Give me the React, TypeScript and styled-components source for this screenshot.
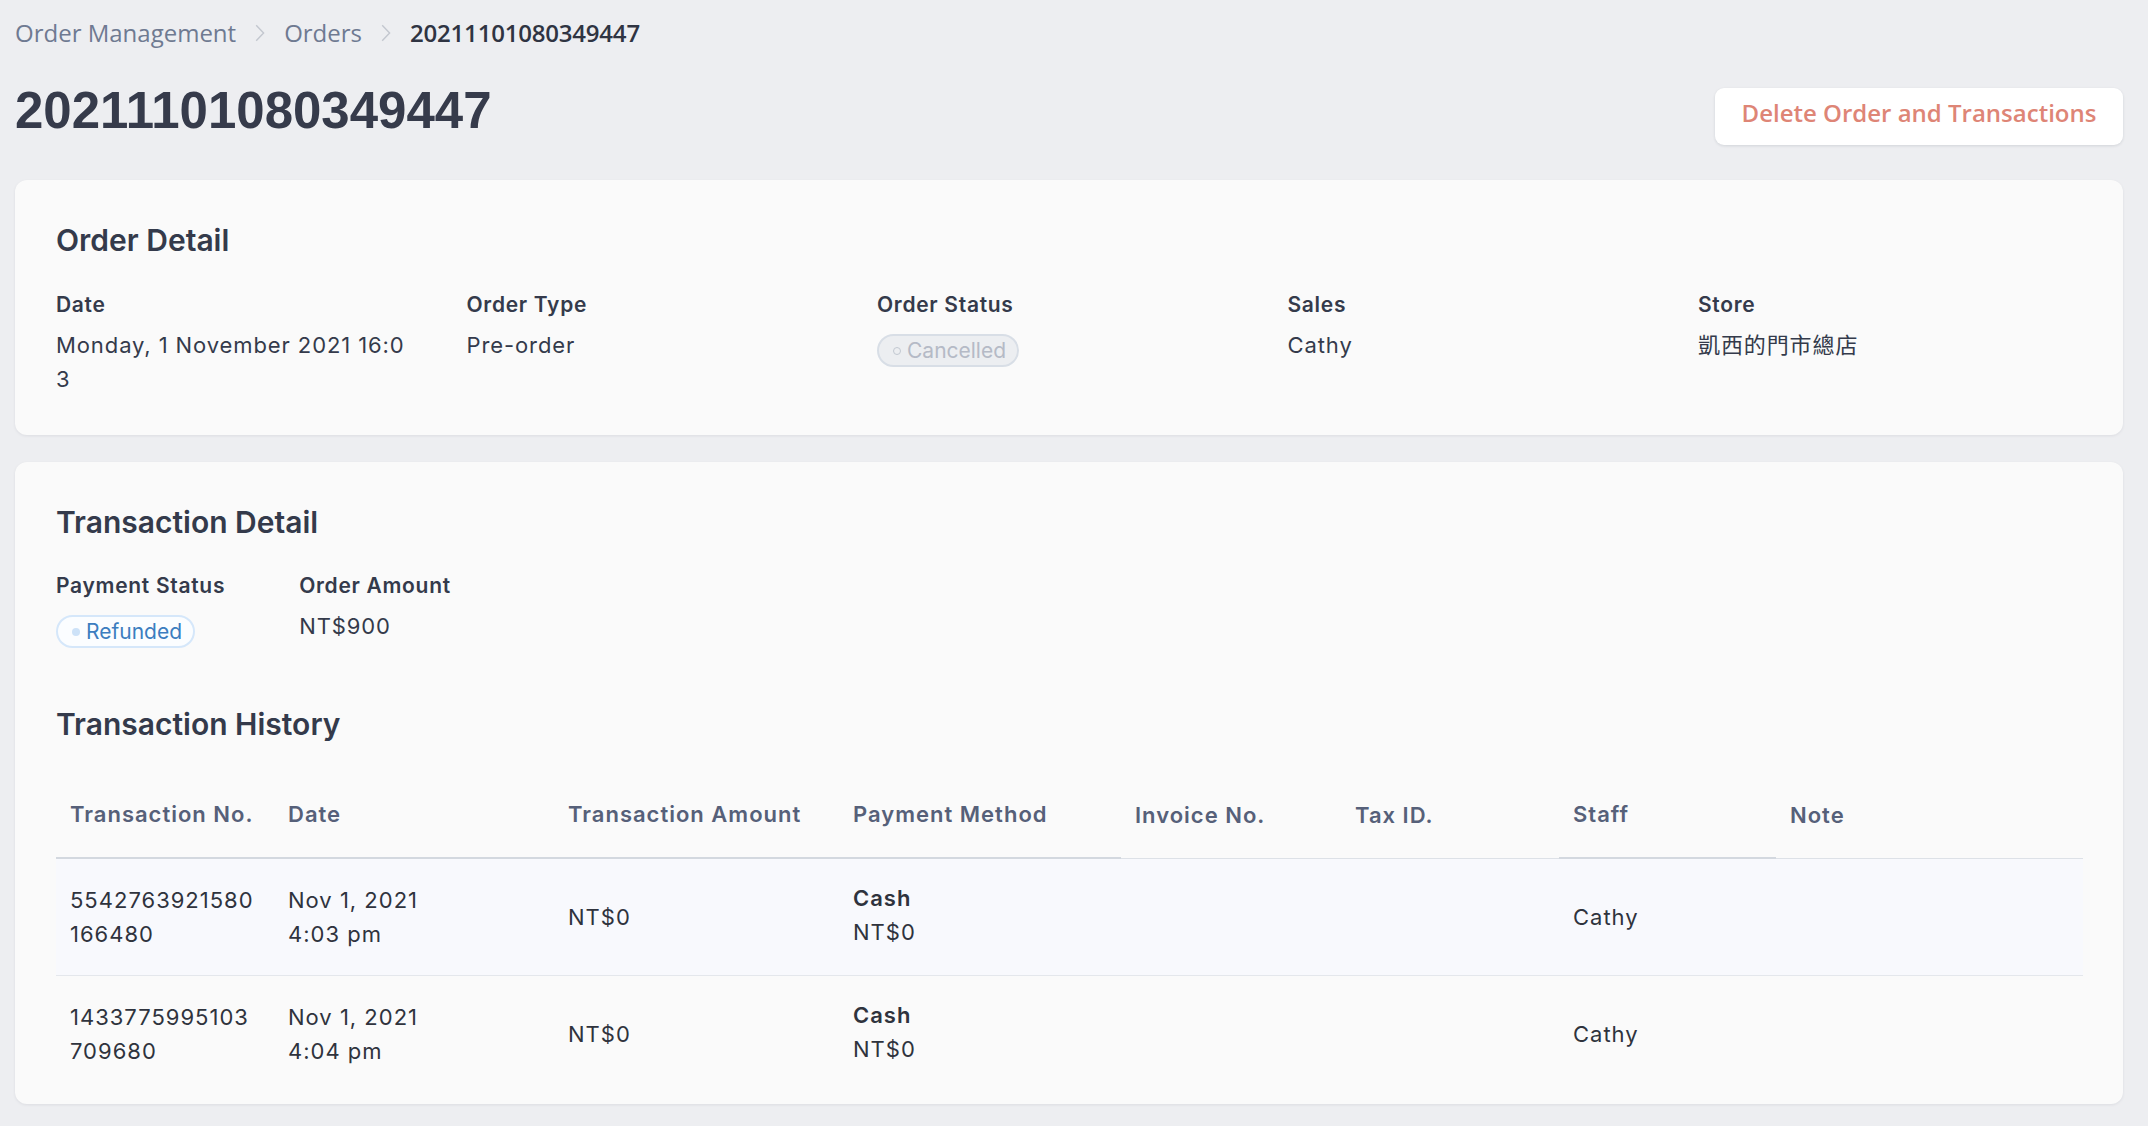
import styled, { createGlobalStyle } from 'styled-components';

const GlobalStyle = createGlobalStyle`
  body {
    margin: 0;
    background: #edeef1;
    font-family: Inter, "Noto Sans CJK TC", sans-serif;
    color: #343a4b;
  }
`;

const Page = styled.div`
  padding: 17px 25px 20px 15px;
`;

const Breadcrumb = styled.nav`
  display: flex;
  align-items: center;
  gap: 19px;
  font-family: "Open Sans", sans-serif;
  font-size: 24px;
  line-height: 32px;
  color: #6f7a91;
`;

const Crumb = styled.span<{ $current?: boolean }>`
  font-weight: ${(p) => (p.$current ? 600 : 400)};
  color: ${(p) => (p.$current ? '#2f3442' : '#6f7a91')};
  letter-spacing: ${(p) => (p.$current ? '-0.2px' : '0')};
`;

const TitleRow = styled.div`
  display: flex;
  justify-content: space-between;
  align-items: flex-start;
  margin-top: 32px;
  margin-bottom: 35px;
`;

const Title = styled.h1`
  margin: 0;
  font-family: "Liberation Sans", Arial, sans-serif;
  font-weight: 700;
  font-size: 51px;
  line-height: 60px;
  color: #363b4b;
`;

const DangerButton = styled.button`
  margin-top: 7px;
  width: 408px;
  height: 57px;
  padding: 0 0 9px;
  border: none;
  border-radius: 9px;
  background: #ffffff;
  box-shadow: 0 1px 3px rgba(20, 30, 50, 0.12);
  font-family: "Open Sans", sans-serif;
  font-weight: 600;
  font-size: 24px;
  color: #de8576;
  cursor: pointer;
`;

const Card = styled.section<{ $bottom?: number }>`
  background: #fafafa;
  border-radius: 12px;
  box-shadow: 0 1px 3px rgba(20, 30, 50, 0.08);
  padding: 42px 40px ${(p) => p.$bottom ?? 39}px 41px;
  & + & {
    margin-top: 27px;
  }
`;

const CardTitle = styled.h2<{ $gap?: number }>`
  margin: ${(p) => p.$gap ?? 0}px 0 0;
  font-size: 30px;
  font-weight: 600;
  line-height: 36px;
  color: #343a4b;
`;

const FieldGrid = styled.div`
  display: grid;
  grid-template-columns: repeat(5, 356px);
  column-gap: 54.5px;
  margin-top: 33px;
`;

const FieldRow = styled.div`
  display: flex;
  gap: 74px;
  margin-top: 32px;
`;

const Field = styled.div`
  display: flex;
  flex-direction: column;
  align-items: flex-start;
`;

const Label = styled.div`
  font-size: 21px;
  font-weight: 600;
  line-height: 28px;
  letter-spacing: 0.7px;
  color: #343a4b;
`;

const Value = styled.div`
  margin-top: 9px;
  font-size: 22px;
  line-height: 34px;
  letter-spacing: 0.9px;
  color: #343a4b;
  word-break: break-all;
`;

const Badge = styled.span<{ $tone: 'grey' | 'blue' }>`
  display: inline-flex;
  align-items: center;
  gap: 6px;
  margin-top: 15px;
  height: 33px;
  box-sizing: border-box;
  padding: 0 11px 0 14px;
  border-radius: 999px;
  border: 2px solid ${(p) => (p.$tone === 'blue' ? '#d5e7fa' : '#d8dee6')};
  background: ${(p) => (p.$tone === 'blue' ? '#fbfdff' : '#eceef1')};
  color: ${(p) => (p.$tone === 'blue' ? '#3c7dbf' : '#b5bac6')};
  font-size: 21px;
  line-height: 1;
`;

const Dot = styled.span<{ $tone: 'grey' | 'blue' }>`
  width: 8px;
  height: 8px;
  box-sizing: border-box;
  border-radius: 50%;
  background: ${(p) => (p.$tone === 'blue' ? '#cde2f8' : 'transparent')};
  border: ${(p) => (p.$tone === 'blue' ? 'none' : '1.5px solid #c2c8d1')};
`;

const Table = styled.table`
  width: 100%;
  margin-top: 30px;
  border-collapse: collapse;
  table-layout: fixed;
  font-size: 22px;
  letter-spacing: 1px;
`;

const Col = styled.col<{ $w?: number }>`
  width: ${(p) => (p.$w ? `${p.$w}px` : 'auto')};
`;

const Th = styled.th<{ $sortable?: boolean }>`
  padding: 25px 14px 26px;
  text-align: left;
  font-weight: 600;
  line-height: 34px;
  color: #566079;
  border-bottom: ${(p) => (p.$sortable ? '2px solid #d3d8df' : '1px solid #dde1e7')};
  vertical-align: bottom;
`;

const Tr = styled.tr<{ $tint?: boolean; $last?: boolean }>`
  background: ${(p) => (p.$tint ? '#f8f9fd' : 'transparent')};
  border-bottom: ${(p) => (p.$last ? 'none' : '1px solid #e4e7ec')};
`;

const Td = styled.td`
  padding: 24px 14px;
  line-height: 34px;
  color: #2f333d;
  vertical-align: middle;
  word-break: break-all;
`;

const Method = styled.div`
  margin-top: -5px;
`;

const Strong = styled.div`
  font-weight: 600;
`;

function Chevron() {
  return (
    <svg width="10" height="18" viewBox="0 0 10 18" fill="none">
      <path d="M1.2 1.2 L8.6 9 L1.2 16.8" stroke="#c3c7cf" strokeWidth="1.4" />
    </svg>
  );
}

const columns = [
  { label: 'Transaction No.', w: 218, sortable: true },
  { label: 'Date', w: 280, sortable: true },
  { label: 'Transaction Amount', w: 285, sortable: true },
  { label: 'Payment Method', w: 282, sortable: true },
  { label: 'Invoice No.', w: 220, sortable: false },
  { label: 'Tax ID.', w: 218, sortable: false },
  { label: 'Staff', w: 217, sortable: true },
  { label: 'Note', w: 0, sortable: false },
];

const transactions = [
  { no: '5542763921580166480', date: 'Nov 1, 2021', time: '4:03 pm', amount: 'NT$0', method: 'Cash', paid: 'NT$0', staff: 'Cathy' },
  { no: '1433775995103709680', date: 'Nov 1, 2021', time: '4:04 pm', amount: 'NT$0', method: 'Cash', paid: 'NT$0', staff: 'Cathy' },
];

export default function App() {
  return (
    <>
      <GlobalStyle />
      <Page>
        <Breadcrumb>
          <Crumb>Order Management</Crumb>
          <Chevron />
          <Crumb>Orders</Crumb>
          <Chevron />
          <Crumb $current>20211101080349447</Crumb>
        </Breadcrumb>

        <TitleRow>
          <Title>20211101080349447</Title>
          <DangerButton>Delete Order and Transactions</DangerButton>
        </TitleRow>

        <Card>
          <CardTitle>Order Detail</CardTitle>
          <FieldGrid>
            <Field>
              <Label>Date</Label>
              <Value>Monday, 1 November 2021 16:03</Value>
            </Field>
            <Field>
              <Label>Order Type</Label>
              <Value>Pre-order</Value>
            </Field>
            <Field>
              <Label>Order Status</Label>
              <Badge $tone="grey">
                <Dot $tone="grey" />
                Cancelled
              </Badge>
            </Field>
            <Field>
              <Label>Sales</Label>
              <Value>Cathy</Value>
            </Field>
            <Field>
              <Label>Store</Label>
              <Value>凱西的門市總店</Value>
            </Field>
          </FieldGrid>
        </Card>

        <Card $bottom={12}>
          <CardTitle>Transaction Detail</CardTitle>
          <FieldRow>
            <Field>
              <Label>Payment Status</Label>
              <Badge $tone="blue">
                <Dot $tone="blue" />
                Refunded
              </Badge>
            </Field>
            <Field>
              <Label>Order Amount</Label>
              <Value>NT$900</Value>
            </Field>
          </FieldRow>

          <CardTitle $gap={58}>Transaction History</CardTitle>
          <Table>
            <colgroup>
              {columns.map((c) => (
                <Col key={c.label} $w={c.w} />
              ))}
            </colgroup>
            <thead>
              <tr>
                {columns.map((c) => (
                  <Th key={c.label} $sortable={c.sortable}>
                    {c.label}
                  </Th>
                ))}
              </tr>
            </thead>
            <tbody>
              {transactions.map((t, i) => (
                <Tr key={t.no} $tint={i === 0} $last={i === transactions.length - 1}>
                  <Td>{t.no}</Td>
                  <Td>
                    <div>{t.date}</div>
                    <div>{t.time}</div>
                  </Td>
                  <Td>{t.amount}</Td>
                  <Td>
                    <Method>
                      <Strong>{t.method}</Strong>
                      <div>{t.paid}</div>
                    </Method>
                  </Td>
                  <Td />
                  <Td />
                  <Td>{t.staff}</Td>
                  <Td />
                </Tr>
              ))}
            </tbody>
          </Table>
        </Card>
      </Page>
    </>
  );
}
